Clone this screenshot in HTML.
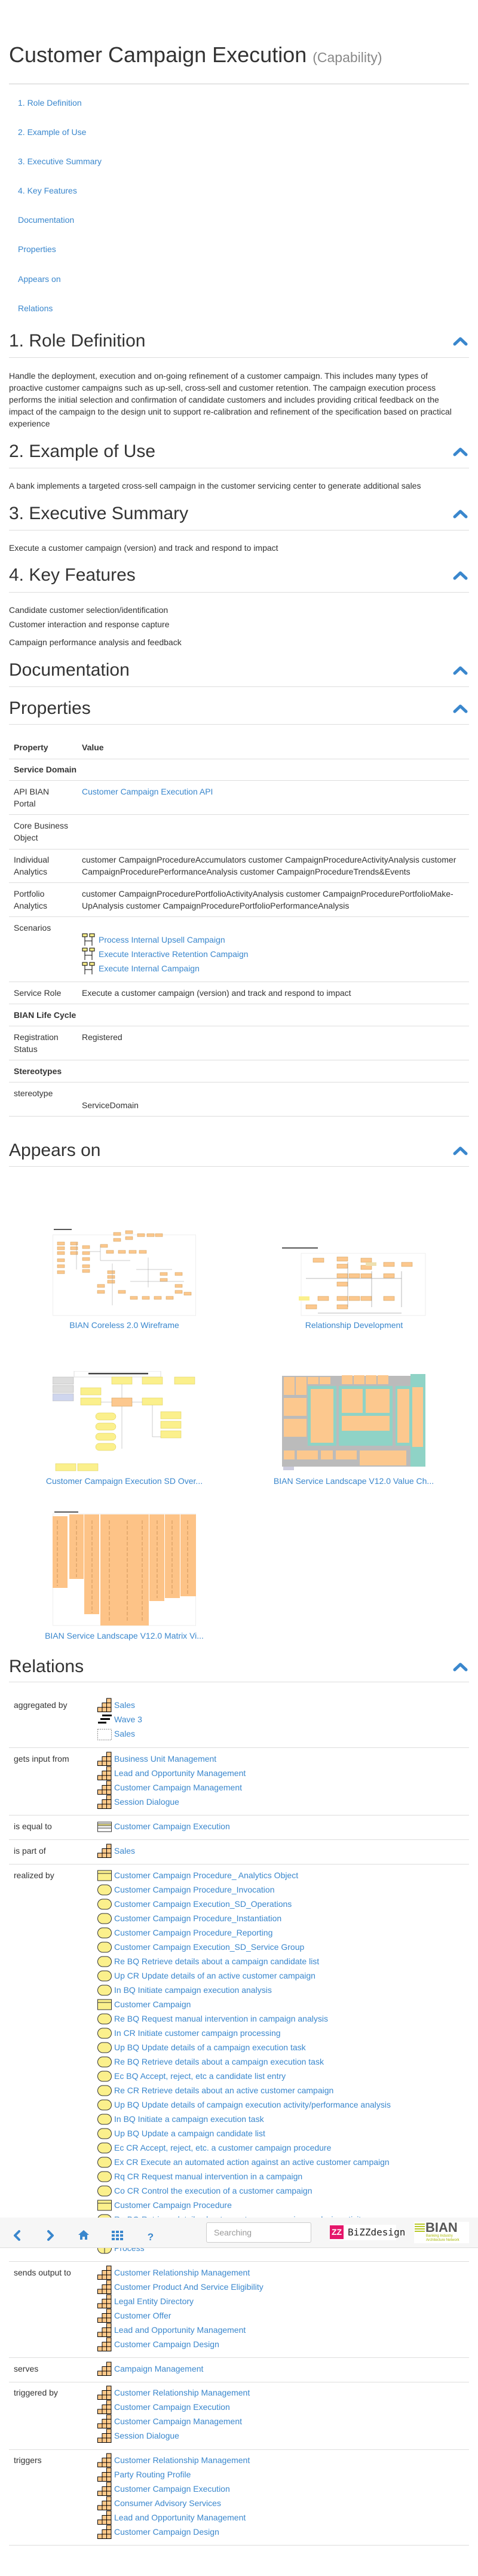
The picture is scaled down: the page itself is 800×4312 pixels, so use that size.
<!DOCTYPE html>
<html><head><meta charset="utf-8">
<style>
body{margin:0;width:800px;height:4312px;position:relative;font:14px/20px "Liberation Sans",Arial,sans-serif;color:#333;overflow:hidden;background:#fff}
.a{position:absolute;white-space:nowrap}
a{color:#3a87cd;text-decoration:none}
.h{position:absolute;left:15px;font-size:30px;line-height:34px;white-space:nowrap;color:#333}
.ln{position:absolute;left:15px;width:770px;height:1px;background:#ddd}
.chev{position:absolute;left:758px;width:25px;height:16px}
.b{font-weight:bold}
.list{position:absolute;left:163px}
.list div{height:24px;line-height:24px;white-space:nowrap}
.list svg{width:24px;height:24px;vertical-align:top;margin-right:4px}
.th{position:absolute}
</style></head><body>
<svg width="0" height="0" style="position:absolute">
<defs>
<g id="st"><rect x="0.5" y="16" width="7.5" height="7.5" fill="#ffc98a" stroke="#000"/><rect x="8" y="16" width="7.5" height="7.5" fill="#ffc98a" stroke="#000"/><rect x="15.5" y="16" width="7.5" height="7.5" fill="#ffc98a" stroke="#000"/><rect x="8" y="8.5" width="7.5" height="7.5" fill="#ffc98a" stroke="#000"/><rect x="15.5" y="8.5" width="7.5" height="7.5" fill="#ffc98a" stroke="#000"/><rect x="15.5" y="1" width="7.5" height="7.5" fill="#ffc98a" stroke="#000"/><rect x="0.5" y="1" width="23" height="22.5" fill="none" stroke="none"/></g>
<g id="op"><rect x="0.5" y="4" width="23" height="17" rx="8.5" fill="#fbf08c" stroke="#333"/></g>
<g id="bo"><rect x="0.5" y="4" width="23" height="17" fill="#fbf08c" stroke="#333"/><line x1="0.5" y1="9" x2="23.5" y2="9" stroke="#333"/></g>
<g id="eq"><rect x="0.5" y="5" width="23" height="16" fill="#fff" stroke="#333"/><rect x="1" y="8" width="22" height="3" fill="#fbf08c"/><line x1="0.5" y1="8" x2="23.5" y2="8" stroke="#333"/><line x1="0.5" y1="11" x2="23.5" y2="11" stroke="#333"/><line x1="0.5" y1="15" x2="23.5" y2="15" stroke="#333"/></g>
<g id="chv"><path d="M3 13 L12.5 4 L22 13" fill="none" stroke="#3a87cd" stroke-width="5" stroke-linecap="round" stroke-linejoin="round"/></g>
<g id="sc"><rect x="1" y="2" width="8" height="5" fill="#fbf08c" stroke="#000"/><rect x="13" y="2" width="8" height="5" fill="#fbf08c" stroke="#000"/><line x1="5" y1="7" x2="5" y2="22" stroke="#000"/><line x1="17" y1="7" x2="17" y2="22" stroke="#000"/><line x1="5" y1="14" x2="17" y2="14" stroke="#000"/></g>
</defs></svg>

<div class="a" style="left:15px;top:70px;font-size:36px;line-height:44px">Customer Campaign Execution <span style="font-size:23px;color:#888">(Capability)</span></div>
<div class="ln" style="top:140px;background:#ccc"></div>

<div class="a" style="left:30px;top:162px"><a>1. Role Definition</a></div>
<div class="a" style="left:30px;top:211px"><a>2. Example of Use</a></div>
<div class="a" style="left:30px;top:260px"><a>3. Executive Summary</a></div>
<div class="a" style="left:30px;top:309px"><a>4. Key Features</a></div>
<div class="a" style="left:30px;top:358px"><a>Documentation</a></div>
<div class="a" style="left:30px;top:407px"><a>Properties</a></div>
<div class="a" style="left:30px;top:457px"><a>Appears on</a></div>
<div class="a" style="left:30px;top:506px"><a>Relations</a></div>

<div class="h" style="top:554px">1. Role Definition</div><svg class="chev" style="top:563px"><use href="#chv"/></svg><div class="ln" style="top:598px"></div>
<div class="a" style="left:15px;top:619px">Handle the deployment, execution and on-going refinement of a customer campaign. This includes many types of<br>proactive customer campaigns such as up-sell, cross-sell and customer retention. The campaign execution process<br>performs the initial selection and confirmation of candidate customers and includes providing critical feedback on the<br>impact of the campaign to the design unit to support re-calibration and refinement of the specification based on practical<br>experience</div>

<div class="h" style="top:739px">2. Example of Use</div><svg class="chev" style="top:748px"><use href="#chv"/></svg><div class="ln" style="top:783px"></div>
<div class="a" style="left:15px;top:803px">A bank implements a targeted cross-sell campaign in the customer servicing center to generate additional sales</div>

<div class="h" style="top:843px">3. Executive Summary</div><svg class="chev" style="top:852px"><use href="#chv"/></svg><div class="ln" style="top:887px"></div>
<div class="a" style="left:15px;top:907px">Execute a customer campaign (version) and track and respond to impact</div>

<div class="h" style="top:946px">4. Key Features</div><svg class="chev" style="top:955px"><use href="#chv"/></svg><div class="ln" style="top:991px"></div>
<div class="a" style="left:15px;top:1011px">Candidate customer selection/identification</div>
<div class="a" style="left:15px;top:1035px">Customer interaction and response capture</div>
<div class="a" style="left:15px;top:1065px">Campaign performance analysis and feedback</div>

<div class="h" style="top:1105px">Documentation</div><svg class="chev" style="top:1114px"><use href="#chv"/></svg><div class="ln" style="top:1149px"></div>
<div class="h" style="top:1169px">Properties</div><svg class="chev" style="top:1178px"><use href="#chv"/></svg><div class="ln" style="top:1212px"></div>

<div class="a b" style="left:23px;top:1241px">Property</div><div class="a b" style="left:137px;top:1241px">Value</div>
<div class="ln" style="top:1270px"></div>
<div class="a b" style="left:23px;top:1278px">Service Domain</div>
<div class="ln" style="top:1306px"></div>
<div class="a" style="left:23px;top:1315px">API BIAN<br>Portal</div><div class="a" style="left:137px;top:1315px"><a>Customer Campaign Execution API</a></div>
<div class="ln" style="top:1363px"></div>
<div class="a" style="left:23px;top:1372px">Core Business<br>Object</div>
<div class="ln" style="top:1421px"></div>
<div class="a" style="left:23px;top:1429px">Individual<br>Analytics</div><div class="a" style="left:137px;top:1429px">customer CampaignProcedureAccumulators customer CampaignProcedureActivityAnalysis customer<br>CampaignProcedurePerformanceAnalysis customer CampaignProcedureTrends&amp;Events</div>
<div class="ln" style="top:1477px"></div>
<div class="a" style="left:23px;top:1486px">Portfolio<br>Analytics</div><div class="a" style="left:137px;top:1486px">customer CampaignProcedurePortfolioActivityAnalysis customer CampaignProcedurePortfolioMake-<br>UpAnalysis customer CampaignProcedurePortfolioPerformanceAnalysis</div>
<div class="ln" style="top:1534px"></div>
<div class="a" style="left:23px;top:1543px">Scenarios</div>
<div class="list" style="left:137px;top:1561px">
<div><svg><use href="#sc"/></svg><a>Process Internal Upsell Campaign</a></div>
<div><svg><use href="#sc"/></svg><a>Execute Interactive Retention Campaign</a></div>
<div><svg><use href="#sc"/></svg><a>Execute Internal Campaign</a></div>
</div>
<div class="ln" style="top:1643px"></div>
<div class="a" style="left:23px;top:1652px">Service Role</div><div class="a" style="left:137px;top:1652px">Execute a customer campaign (version) and track and respond to impact</div>
<div class="ln" style="top:1680px"></div>
<div class="a b" style="left:23px;top:1689px">BIAN Life Cycle</div>
<div class="ln" style="top:1717px"></div>
<div class="a" style="left:23px;top:1726px">Registration<br>Status</div><div class="a" style="left:137px;top:1726px">Registered</div>
<div class="ln" style="top:1774px"></div>
<div class="a b" style="left:23px;top:1783px">Stereotypes</div>
<div class="ln" style="top:1811px"></div>
<div class="a" style="left:23px;top:1820px">stereotype</div><div class="a" style="left:137px;top:1840px">ServiceDomain</div>
<div class="ln" style="top:1868px"></div>

<div class="h" style="top:1909px">Appears on</div><svg class="chev" style="top:1918px"><use href="#chv"/></svg><div class="ln" style="top:1952px"></div>

<!-- thumbnails -->
<svg class="th" style="left:88px;top:2055px" width="240" height="148">
<rect x="0.5" y="12" width="239" height="135" fill="#fff" stroke="#eee"/>
<rect x="2" y="2" width="30" height="2" fill="#555"/>
<g fill="#fcc88e" stroke="#c8964f" stroke-width="0.5">
<rect x="8" y="24" width="12" height="5"/><rect x="8" y="32" width="12" height="5"/><rect x="8" y="40" width="12" height="5"/><rect x="8" y="52" width="12" height="5"/><rect x="8" y="62" width="12" height="5"/><rect x="8" y="72" width="12" height="5"/>
<rect x="30" y="24" width="12" height="5"/><rect x="30" y="32" width="12" height="5"/><rect x="30" y="40" width="12" height="5"/>
<rect x="50" y="30" width="12" height="5"/><rect x="50" y="40" width="12" height="5"/><rect x="50" y="50" width="12" height="5"/><rect x="50" y="62" width="12" height="5"/><rect x="50" y="70" width="12" height="5"/>
<rect x="80" y="28" width="12" height="5"/><rect x="90" y="38" width="12" height="5"/><rect x="102" y="8" width="12" height="5"/><rect x="102" y="18" width="12" height="5"/><rect x="122" y="5" width="12" height="5"/><rect x="122" y="15" width="12" height="5"/><rect x="142" y="10" width="12" height="5"/><rect x="158" y="10" width="12" height="5"/><rect x="172" y="10" width="12" height="5"/>
<rect x="110" y="38" width="12" height="5"/><rect x="128" y="38" width="12" height="5"/><rect x="145" y="38" width="12" height="5"/>
<rect x="92" y="72" width="12" height="5"/><rect x="92" y="80" width="12" height="5"/><rect x="92" y="88" width="12" height="5"/><rect x="180" y="75" width="12" height="5"/><rect x="180" y="85" width="12" height="5"/><rect x="205" y="75" width="12" height="5"/><rect x="205" y="95" width="12" height="5"/><rect x="205" y="105" width="12" height="5"/>
<rect x="75" y="95" width="12" height="5"/><rect x="75" y="105" width="12" height="5"/><rect x="110" y="105" width="12" height="5"/>
<rect x="130" y="115" width="12" height="5"/><rect x="150" y="115" width="12" height="5"/><rect x="170" y="115" width="12" height="5"/><rect x="190" y="115" width="12" height="5"/><rect x="220" y="108" width="12" height="5"/>
</g>
<g fill="none" stroke="#999" stroke-width="0.5"><path d="M40 25V70M62 40H80M80 30V55H130M100 60V130M130 90H220M160 50V100M140 70H200"/></g>
</svg>
<svg class="th" style="left:472px;top:2088px" width="241" height="115">
<rect x="0" y="0" width="60" height="2" fill="#555"/>
<rect x="32" y="10" width="208" height="104" fill="#fff" stroke="#eee"/>
<g fill="#fcc88e" stroke="#c8964f" stroke-width="0.5">
<rect x="52" y="18" width="18" height="7"/><rect x="92" y="16" width="18" height="7"/><rect x="92" y="28" width="18" height="7"/><rect x="132" y="18" width="18" height="7"/><rect x="132" y="30" width="18" height="7"/><rect x="200" y="25" width="18" height="7"/><rect x="170" y="25" width="18" height="7"/>
<rect x="92" y="44" width="18" height="7"/><rect x="92" y="58" width="18" height="7"/><rect x="112" y="44" width="18" height="7"/><rect x="132" y="44" width="18" height="7"/><rect x="170" y="44" width="18" height="7"/>
<rect x="60" y="82" width="18" height="7"/><rect x="92" y="82" width="18" height="7"/><rect x="112" y="82" width="18" height="7"/><rect x="132" y="82" width="18" height="7"/><rect x="170" y="82" width="18" height="7"/><rect x="92" y="96" width="18" height="7"/><rect x="40" y="96" width="18" height="7"/>
</g>
<rect x="28" y="82" width="18" height="7" fill="#fbf08c"/>
<rect x="140" y="25" width="18" height="6" fill="#eee0b0"/>
<path d="M40 52H200M110 25V100M150 40V100M200 40V100M60 110H200" stroke="#777" stroke-width="0.5" fill="none"/>
</svg>
<div class="a" style="left:88px;top:2208px;width:240px;text-align:center"><a>BIAN Coreless 2.0 Wireframe</a></div>
<div class="a" style="left:472px;top:2208px;width:241px;text-align:center"><a>Relationship Development</a></div>

<svg class="th" style="left:88px;top:2295px" width="240" height="168">
<rect x="36" y="0" width="145" height="10" fill="#fff" stroke="#ddd"/>
<rect x="60" y="3" width="100" height="2.5" fill="#444"/>
<g fill="#ddd" stroke="#aaa" stroke-width="0.5"><rect x="0" y="10" width="35" height="12"/><rect x="0" y="24" width="35" height="12"/><rect x="0" y="38" width="35" height="12" fill="#cfd6ee"/></g>
<g fill="#fbf08c" stroke="#d8c850" stroke-width="0.5">
<rect x="99" y="10" width="34" height="12"/><rect x="150" y="10" width="34" height="12"/><rect x="204" y="10" width="34" height="12"/>
<rect x="47" y="28" width="34" height="12"/><rect x="47" y="45" width="34" height="12"/><rect x="150" y="45" width="34" height="12"/>
<rect x="72" y="70" width="34" height="12" rx="6"/><rect x="72" y="87" width="34" height="12" rx="6"/><rect x="72" y="104" width="34" height="12" rx="6"/><rect x="72" y="121" width="34" height="12" rx="6"/>
<rect x="181" y="68" width="34" height="12"/><rect x="181" y="84" width="34" height="12"/><rect x="181" y="100" width="34" height="12"/>
<rect x="5" y="155" width="34" height="12"/><rect x="42" y="155" width="34" height="12"/>
</g>
<rect x="99" y="45" width="34" height="14" fill="#fcc88e" stroke="#c8964f" stroke-width="0.5"/>
<path d="M116 22V45M116 59V130M133 52H150M167 57V110H181M81 52H99" stroke="#999" stroke-width="0.5" fill="none"/>
</svg>
<svg class="th" style="left:472px;top:2300px" width="241" height="165">
<rect x="0" y="3" width="240" height="152" fill="#bbb"/>
<rect x="43" y="20" width="48" height="100" fill="#8fd3c6"/>
<rect x="95" y="20" width="90" height="100" fill="#8fd3c6"/>
<rect x="190" y="20" width="25" height="100" fill="#8fd3c6"/>
<rect x="215" y="0" width="25" height="155" fill="#8fd3c6"/>
<g fill="#fcc88e">
<rect x="3" y="5" width="18" height="30"/><rect x="23" y="5" width="18" height="30"/><rect x="43" y="5" width="18" height="12"/><rect x="63" y="5" width="18" height="12"/><rect x="100" y="2" width="18" height="15"/><rect x="120" y="2" width="18" height="15"/><rect x="140" y="2" width="18" height="15"/><rect x="160" y="2" width="18" height="15"/>
<rect x="3" y="40" width="38" height="30"/><rect x="3" y="75" width="38" height="30"/>
<rect x="48" y="25" width="38" height="90"/><rect x="100" y="25" width="35" height="40"/><rect x="140" y="25" width="40" height="40"/><rect x="100" y="70" width="80" height="25"/>
<rect x="193" y="25" width="20" height="90"/><rect x="218" y="22" width="18" height="100"/>
<rect x="3" y="128" width="18" height="15"/><rect x="25" y="128" width="35" height="15"/><rect x="65" y="128" width="20" height="15"/><rect x="90" y="128" width="35" height="15"/><rect x="130" y="128" width="78" height="25"/>
</g>
<rect x="2" y="155" width="18" height="6" fill="#ccd"/>
</svg>
<div class="a" style="left:58px;top:2469px;width:300px;text-align:center"><a>Customer Campaign Execution SD Over...</a></div>
<div class="a" style="left:442px;top:2469px;width:300px;text-align:center"><a>BIAN Service Landscape V12.0 Value Ch...</a></div>

<svg class="th" style="left:88px;top:2530px" width="240" height="192">
<rect x="0.5" y="4" width="239" height="187" fill="#fff" stroke="#eee"/>
<rect x="3" y="0" width="40" height="2" fill="#555"/>
<g fill="#fdc387">
<rect x="0" y="8" width="25" height="120"/><rect x="28" y="5" width="24" height="108"/><rect x="53" y="5" width="25" height="167"/><rect x="80" y="5" width="81" height="186"/><rect x="162" y="5" width="25" height="145"/><rect x="188" y="5" width="25" height="140"/><rect x="214" y="5" width="26" height="137"/>
</g>
<g stroke="#b07a40" stroke-width="0.6" stroke-dasharray="6 3"><path d="M8 15V125M40 15V110M66 15V170M95 15V185M125 15V185M150 15V185M175 15V145M200 15V140M226 15V138"/></g>
</svg>
<div class="a" style="left:58px;top:2728px;width:300px;text-align:center"><a>BIAN Service Landscape V12.0 Matrix Vi...</a></div>

<div class="h" style="top:2773px">Relations</div><svg class="chev" style="top:2782px"><use href="#chv"/></svg><div class="ln" style="top:2815px"></div>

<div class="a" style="left:23px;top:2844px">aggregated by</div>
<div class="list" style="top:2842px">
<div><svg><use href="#st"/></svg><a>Sales</a></div>
<div><svg><rect x="8" y="4" width="16" height="3" fill="#000"/><rect x="5" y="10" width="16" height="3" fill="#000"/><rect x="1" y="16" width="14" height="3" fill="#000"/></svg><a>Wave 3</a></div>
<div><svg><rect x="0.5" y="4.5" width="23" height="18" fill="none" stroke="#888" stroke-dasharray="2 1.5"/></svg><a>Sales</a></div>
</div>
<div class="ln" style="top:2925px"></div>
<div class="a" style="left:23px;top:2934px">gets input from</div>
<div class="list" style="top:2932px">
<div><svg><use href="#st"/></svg><a>Business Unit Management</a></div>
<div><svg><use href="#st"/></svg><a>Lead and Opportunity Management</a></div>
<div><svg><use href="#st"/></svg><a>Customer Campaign Management</a></div>
<div><svg><use href="#st"/></svg><a>Session Dialogue</a></div>
</div>
<div class="ln" style="top:3038px"></div>
<div class="a" style="left:23px;top:3047px">is equal to</div>
<div class="list" style="top:3045px"><div><svg><use href="#eq"/></svg><a>Customer Campaign Execution</a></div></div>
<div class="ln" style="top:3079px"></div>
<div class="a" style="left:23px;top:3088px">is part of</div>
<div class="list" style="top:3086px"><div><svg><use href="#st"/></svg><a>Sales</a></div></div>
<div class="ln" style="top:3120px"></div>
<div class="a" style="left:23px;top:3129px">realized by</div>
<div class="list" style="top:3127px">
<div><svg><use href="#bo"/></svg><a>Customer Campaign Procedure_ Analytics Object</a></div>
<div><svg><use href="#op"/></svg><a>Customer Campaign Procedure_Invocation</a></div>
<div><svg><use href="#op"/></svg><a>Customer Campaign Execution_SD_Operations</a></div>
<div><svg><use href="#op"/></svg><a>Customer Campaign Procedure_Instantiation</a></div>
<div><svg><use href="#op"/></svg><a>Customer Campaign Procedure_Reporting</a></div>
<div><svg><use href="#op"/></svg><a>Customer Campaign Execution_SD_Service Group</a></div>
<div><svg><use href="#op"/></svg><a>Re BQ Retrieve details about a campaign candidate list</a></div>
<div><svg><use href="#op"/></svg><a>Up CR Update details of an active customer campaign</a></div>
<div><svg><use href="#op"/></svg><a>In BQ Initiate campaign execution analysis</a></div>
<div><svg><use href="#bo"/></svg><a>Customer Campaign</a></div>
<div><svg><use href="#op"/></svg><a>Re BQ Request manual intervention in campaign analysis</a></div>
<div><svg><use href="#op"/></svg><a>In CR Initiate customer campaign processing</a></div>
<div><svg><use href="#op"/></svg><a>Up BQ Update details of a campaign execution task</a></div>
<div><svg><use href="#op"/></svg><a>Re BQ Retrieve details about a campaign execution task</a></div>
<div><svg><use href="#op"/></svg><a>Ec BQ Accept, reject, etc a candidate list entry</a></div>
<div><svg><use href="#op"/></svg><a>Re CR Retrieve details about an active customer campaign</a></div>
<div><svg><use href="#op"/></svg><a>Up BQ Update details of campaign execution activity/performance analysis</a></div>
<div><svg><use href="#op"/></svg><a>In BQ Initiate a campaign execution task</a></div>
<div><svg><use href="#op"/></svg><a>Up BQ Update a campaign candidate list</a></div>
<div><svg><use href="#op"/></svg><a>Ec CR Accept, reject, etc. a customer campaign procedure</a></div>
<div><svg><use href="#op"/></svg><a>Ex CR Execute an automated action against an active customer campaign</a></div>
<div><svg><use href="#op"/></svg><a>Rq CR Request manual intervention in a campaign</a></div>
<div><svg><use href="#op"/></svg><a>Co CR Control the execution of a customer campaign</a></div>
<div><svg><use href="#bo"/></svg><a>Customer Campaign Procedure</a></div>
<div><svg><use href="#op"/></svg><a>Re BQ Retrieve details about a customer campaign analysis activity</a></div>
<div><svg><use href="#op"/></svg><a>Customer Campaign Execution</a></div>
<div><svg><rect x="0.5" y="4" width="23" height="17" rx="8.5" fill="#fbf08c" stroke="#333"/><line x1="12" y1="4" x2="12" y2="21" stroke="#333"/></svg><a>Process</a></div>
</div>
<div class="ln" style="top:3785px"></div>
<div class="a" style="left:23px;top:3794px">sends output to</div>
<div class="list" style="top:3792px">
<div><svg><use href="#st"/></svg><a>Customer Relationship Management</a></div>
<div><svg><use href="#st"/></svg><a>Customer Product And Service Eligibility</a></div>
<div><svg><use href="#st"/></svg><a>Legal Entity Directory</a></div>
<div><svg><use href="#st"/></svg><a>Customer Offer</a></div>
<div><svg><use href="#st"/></svg><a>Lead and Opportunity Management</a></div>
<div><svg><use href="#st"/></svg><a>Customer Campaign Design</a></div>
</div>
<div class="ln" style="top:3946px"></div>
<div class="a" style="left:23px;top:3955px">serves</div>
<div class="list" style="top:3953px"><div><svg><use href="#st"/></svg><a>Campaign Management</a></div></div>
<div class="ln" style="top:3987px"></div>
<div class="a" style="left:23px;top:3995px">triggered by</div>
<div class="list" style="top:3993px">
<div><svg><use href="#st"/></svg><a>Customer Relationship Management</a></div>
<div><svg><use href="#st"/></svg><a>Customer Campaign Execution</a></div>
<div><svg><use href="#st"/></svg><a>Customer Campaign Management</a></div>
<div><svg><use href="#st"/></svg><a>Session Dialogue</a></div>
</div>
<div class="ln" style="top:4100px"></div>
<div class="a" style="left:23px;top:4108px">triggers</div>
<div class="list" style="top:4106px">
<div><svg><use href="#st"/></svg><a>Customer Relationship Management</a></div>
<div><svg><use href="#st"/></svg><a>Party Routing Profile</a></div>
<div><svg><use href="#st"/></svg><a>Customer Campaign Execution</a></div>
<div><svg><use href="#st"/></svg><a>Consumer Advisory Services</a></div>
<div><svg><use href="#st"/></svg><a>Lead and Opportunity Management</a></div>
<div><svg><use href="#st"/></svg><a>Customer Campaign Design</a></div>
</div>
<div class="ln" style="top:4260px"></div>

<!-- toolbar -->
<div class="a" style="left:0;top:3712px;width:800px;height:50px;background:#f6f6f6;border-bottom:1px solid #ddd"></div>
<svg class="a" style="left:0;top:3712px" width="280" height="50">
<g fill="none" stroke="#3a87cd" stroke-width="4" stroke-linecap="round" stroke-linejoin="round">
<path d="M32 23 L25 30 L32 37"/><path d="M81 23 L88 30 L81 37"/></g>
<path d="M140 21 L131 29 H134 V37 H138 V32 H142 V37 H146 V29 H149 Z" fill="#3a87cd"/>
<g fill="#3a87cd"><rect x="187" y="22" width="5" height="4"/><rect x="194" y="22" width="5" height="4"/><rect x="201" y="22" width="5" height="4"/><rect x="187" y="28" width="5" height="4"/><rect x="194" y="28" width="5" height="4"/><rect x="201" y="28" width="5" height="4"/><rect x="187" y="34" width="5" height="4"/><rect x="194" y="34" width="5" height="4"/><rect x="201" y="34" width="5" height="4"/></g>
<text x="252" y="38" font-family="Liberation Sans" font-weight="bold" font-size="17" fill="#3a87cd" text-anchor="middle">?</text>
</svg>
<div class="a" style="left:345px;top:3720px;width:174px;height:32px;border:1px solid #ccc;border-radius:3px;background:#fff;line-height:32px;font-size:14px;color:#999;text-indent:12px">Searching</div>
<div class="a" style="left:552px;top:3724px;width:111px;height:26px;background:#fff"></div>
<div class="a" style="left:552px;top:3725px;width:23px;height:23px;background:#e5176b;color:#fff;font:bold 14px/23px 'Liberation Sans',sans-serif;text-align:center">ZZ</div>
<div class="a" style="left:582px;top:3725px;font:16px/23px 'DejaVu Sans Mono','Liberation Mono',monospace;color:#222">BiZZdesign</div>
<div class="a" style="left:693px;top:3719px;width:92px;height:36px;background:#fff"></div>
<svg class="a" style="left:693px;top:3720px" width="20" height="20"><g stroke="#b8c828" stroke-width="2"><path d="M1 3H18M1 7H18M1 11H18M1 15H18"/></g></svg>
<div class="a" style="left:712px;top:3717px;font:bold 22px/24px 'Liberation Sans',sans-serif;color:#555">BIAN</div>
<div class="a" style="left:713px;top:3740px;font:6px/7px 'Liberation Sans',sans-serif;color:#a8b800">Banking Industry<br>Architecture Network</div>
</body></html>
